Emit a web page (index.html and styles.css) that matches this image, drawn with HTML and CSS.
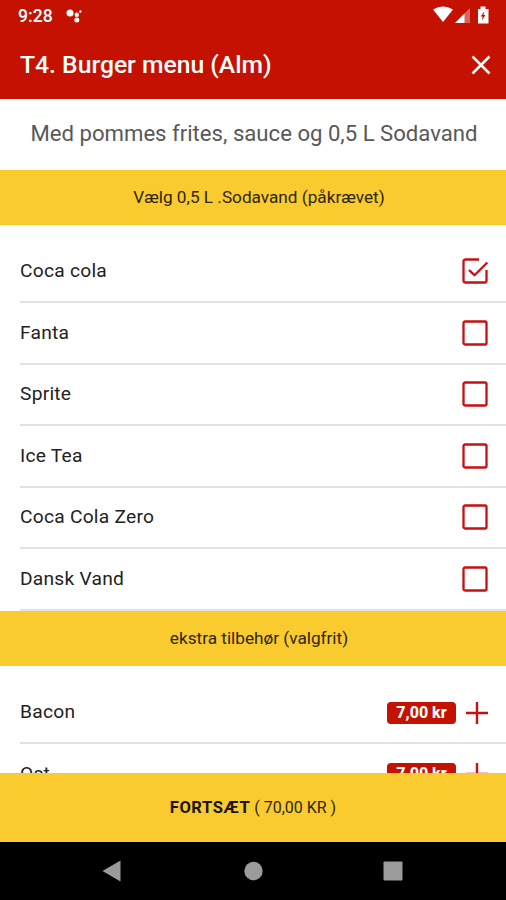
FILE: index.html
```html
<!DOCTYPE html>
<html lang="da">
<head>
<meta charset="utf-8">
<title>Burger menu</title>
<link rel="stylesheet" href="styles.css">
</head>
<body>
<div class="screen">
  <header class="top">
    <div class="status">
      <span class="clock">9:28</span>
      <svg class="assistant" width="18" height="16" viewBox="0 0 18 16" fill="#fff"><circle cx="5" cy="4" r="3.5"/><circle cx="11.800" cy="5.800" r="2.200"/><circle cx="11.800" cy="11" r="2.500"/><circle cx="15.300" cy="2.500" r="1.200"/></svg>
      <svg class="signals" width="60" height="20" viewBox="0 0 60 20"><path d="M0 4.500Q10-1.500 20 4.500L10 17Z" fill="#fff"/><path d="M37 3V18H22Z" fill="#fff" opacity=".35"/><path d="M31.500 8.500V18H22Z" fill="#fff"/><path d="M45 4h2.500V1.500h5V4H55.500V18.500H45Z" fill="#fff"/><path d="M51.500 6L47.700 11.500H49.700L48.800 15.800L52.400 10H50.400Z" fill="#c51100"/></svg>
    </div>
    <div class="titlebar">
      <h1 class="title">T4. Burger menu (Alm)</h1>
      <svg class="close" width="20" height="20" viewBox="0 0 20 20"><path d="M1.500 1.500L18.500 18.500M18.500 1.500L1.500 18.500" stroke="#fff" stroke-width="2.500"/></svg>
    </div>
  </header>
  <main class="content">
    <p class="description">Med pommes frites, sauce og 0,5 L Sodavand</p>
    <h2 class="section">Vælg 0,5 L .Sodavand (påkrævet)</h2>
    <ul class="list">
      <li class="row"><span>Coca cola</span><svg class="box" width="26" height="26" viewBox="0 0 26 26"><path d="M17 1.500H3.500Q1.500 1.500 1.500 3.500V22.500Q1.500 24.500 3.500 24.500H22.500Q24.500 24.500 24.500 22.500V12M7 12L12.500 17.200L25.300 4.500"/></svg></li>
      <li class="row"><span>Fanta</span><svg class="box" width="26" height="26" viewBox="0 0 26 26"><rect x="1.500" y="1.500" width="23" height="23" rx="1.500"/></svg></li>
      <li class="row"><span>Sprite</span><svg class="box" width="26" height="26" viewBox="0 0 26 26"><rect x="1.500" y="1.500" width="23" height="23" rx="1.500"/></svg></li>
      <li class="row"><span>Ice Tea</span><svg class="box" width="26" height="26" viewBox="0 0 26 26"><rect x="1.500" y="1.500" width="23" height="23" rx="1.500"/></svg></li>
      <li class="row"><span>Coca Cola Zero</span><svg class="box" width="26" height="26" viewBox="0 0 26 26"><rect x="1.500" y="1.500" width="23" height="23" rx="1.500"/></svg></li>
      <li class="row"><span>Dansk Vand</span><svg class="box" width="26" height="26" viewBox="0 0 26 26"><rect x="1.500" y="1.500" width="23" height="23" rx="1.500"/></svg></li>
    </ul>
    <h2 class="section">ekstra tilbehør (valgfrit)</h2>
    <ul class="list">
      <li class="row"><span>Bacon</span><b class="price">7,00 kr</b><svg class="plus" width="22" height="22" viewBox="0 0 22 22"><path d="M11 0V22M0 11H22"/></svg></li>
      <li class="row"><span>Ost</span><b class="price">7,00 kr</b><svg class="plus" width="22" height="22" viewBox="0 0 22 22"><path d="M11 0V22M0 11H22"/></svg></li>
    </ul>
  </main>
  <footer class="continue"><b>FORTSÆT</b><span>( 70,00 KR )</span></footer>
  <nav class="nav">
    <svg width="20" height="22" viewBox="0 0 20 22"><path d="M-.5 11L17.500 .5V21.500Z"/></svg>
    <svg width="20" height="20" viewBox="0 0 20 20"><circle cx="10.500" cy="10" r="9.200"/></svg>
    <svg width="20" height="20" viewBox="0 0 20 20"><rect x=".5" y=".5" width="19" height="19" rx="1"/></svg>
  </nav>
</div>
</body>
</html>
```

FILE: styles.css
```css
* { box-sizing: border-box; }
body { margin: 0; font-family: Roboto, sans-serif; color: #222; background: #fff; }
h1, h2, p, ul { margin: 0; padding: 0; font-weight: 400; }
svg { display: block; flex: none; overflow: visible; }
.screen { width: 506px; height: 900px; display: flex; flex-direction: column; overflow: hidden; }
.top { height: 98.5px; flex: none; background: #c51100; color: #fff; }
.status { height: 32px; display: flex; align-items: center; padding: 0 14px 0 18px; }
.clock { font-size: 17.6px; font-weight: 500; line-height: 20px; width: 47px; }
.assistant { margin-top: 1px; }
.signals { margin-left: auto; margin-right: -1px; margin-top: -2px; }
.titlebar { height: 66px; display: flex; align-items: center; justify-content: space-between; padding: 0 15px 0 20px; }
.title { font-size: 24.7px; font-weight: 500; line-height: 30px; }
.content { flex: 1; min-height: 0; overflow: hidden; }
.description { height: 71px; display: flex; align-items: center; justify-content: center; padding: 0 0 2px 2px; font-size: 22.15px; color: #585858; white-space: nowrap; }
.section { height: 55px; display: flex; align-items: center; justify-content: center; padding-left: 12px; background: #f9cb2e; font-size: 17.2px; color: #2e250b; white-space: nowrap; }
.list { list-style: none; padding: 17px 0 0 20px; }
.row { height: 61.5px; display: flex; align-items: center; padding-right: 18px; border-bottom: 2px solid #e3e3e3; font-size: 19.2px; letter-spacing: .25px; }
.row > span { flex: 1; padding-bottom: 1.5px; }
.box { fill: none; stroke: #c51111; stroke-width: 2.3; stroke-linejoin: round; }
.price { width: 69px; height: 22px; border-radius: 4px; background: #c51100; color: #fff; font-size: 16px; font-weight: 800; line-height: 22px; letter-spacing: 0; text-align: center; margin: 1px 10px 0 0; }
.plus { fill: none; stroke: #c51111; stroke-width: 2.4; margin-top: 1px; }
.continue { height: 69px; flex: none; display: flex; align-items: center; justify-content: center; gap: 4px; background: #f9cb2e; color: #2e250b; font-size: 16px; }
.continue b { color: #1b1400; font-size: 16.6px; letter-spacing: .5px; }
.nav { height: 58.5px; flex: none; display: flex; align-items: center; justify-content: space-between; padding: 0 103px; background: #000; fill: #9b9b9b; }
```
